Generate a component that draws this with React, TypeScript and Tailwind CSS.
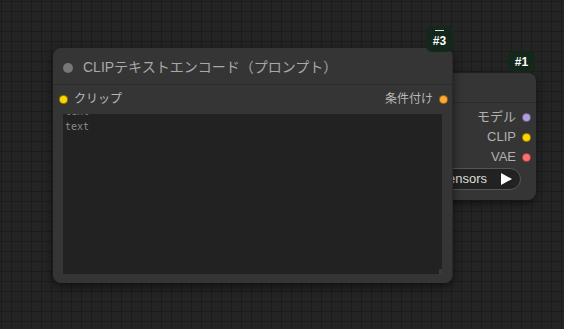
import React from 'react';

const font = "font-['Liberation_Sans','Noto_Sans_CJK_JP',sans-serif]";

const Dot: React.FC<{ color: string }> = ({ color }) => (
  <span className={`block w-[9px] h-[9px] rounded-full border border-black/40 ${color}`} />
);

const Badge: React.FC<{ label: string; className: string }> = ({ label, className }) => (
  <div
    className={`absolute flex flex-col items-center justify-center rounded-[6px] bg-[#13281a] text-white text-[12px] font-bold ${className}`}
  >
    {label}
  </div>
);

const CheckpointNode: React.FC = () => (
  <div className="absolute left-[400px] top-[73px] w-[136px] h-[127px] rounded-[8px] bg-[#353535] shadow-[0_3px_8px_rgba(0,0,0,0.5)]">
    <div className="h-[30px] border-b border-[#2a2a2a]" />
    <div className="flex flex-col items-end pr-[5px] pt-[4px] gap-0 text-[13px] text-[#b0b0b0]">
      {[
        { name: 'モデル', color: 'bg-[#b39ddb]' },
        { name: 'CLIP', color: 'bg-[#ffd500]' },
        { name: 'VAE', color: 'bg-[#ff6e6e]' },
      ].map((o) => (
        <div key={o.name} className="flex items-center gap-[6px] h-[20px]">
          <span>{o.name}</span>
          <Dot color={o.color} />
        </div>
      ))}
    </div>
    <div className="absolute left-[10px] right-[15px] top-[95px] h-[22px] rounded-full bg-[#222] border border-[#555] flex items-center justify-end pr-[8px] gap-[14px] text-[13px] text-[#ddd]">
      <span>ckpt.safetensors</span>
      <span className="w-0 h-0 border-y-[6px] border-y-transparent border-l-[11px] border-l-white" />
    </div>
  </div>
);

const ClipNode: React.FC = () => (
  <div className="absolute left-[53px] top-[48px] w-[400px] h-[235px] rounded-[8px] bg-[#353535] border-r border-[#2a2a2a] shadow-[0_3px_10px_rgba(0,0,0,0.55)] flex flex-col">
    <div className="h-[37px] flex items-center gap-[10px] pl-[10px] pt-[3px] border-b border-[#2b2b2b]">
      <span className="block w-[10px] h-[10px] rounded-full bg-[#777]" />
      <span className="text-[14px] text-[#a8a8a8]">CLIPテキストエンコード（プロンプト）</span>
    </div>
    <div className="flex items-center justify-between h-[24px] pl-[6px] pr-[4px] mt-[2px] text-[12px] text-[#b8b8b8]">
      <div className="flex items-center gap-[6px]">
        <Dot color="bg-[#ffd500]" />
        <span>クリップ</span>
      </div>
      <div className="flex items-center gap-[6px]">
        <span>条件付け</span>
        <Dot color="bg-[#ffa931]" />
      </div>
    </div>
    <div className="mx-[10px] mt-[3px] h-[160px] bg-[#222] relative overflow-hidden">
      <div className="absolute left-[2px] top-[-7px] font-['DejaVu_Sans_Mono',monospace] text-[10px] leading-[10px] text-[#8a8a8a]">
        text
      </div>
      <div className="pl-[2px] pt-[8px] font-['DejaVu_Sans_Mono',monospace] text-[10px] leading-[10px] text-[#8a8a8a]">
        text
      </div>
      <div className="absolute right-0 bottom-0 w-[3px] h-[5px] bg-[#3a3a3a]" />
    </div>
  </div>
);

const App: React.FC = () => {
  return (
    <div
      className={`relative w-[564px] h-[329px] overflow-hidden bg-[#242424] ${font} bg-[linear-gradient(#1c1c1c_1px,transparent_1px),linear-gradient(90deg,#1c1c1c_1px,transparent_1px)] bg-[size:10px_10px] bg-[position:1px_1px]`}
    >
      <CheckpointNode />
      <Badge label="#1" className="left-[508px] top-[51px] w-[27px] h-[21px]" />
      <ClipNode />
      <Badge label="#3" className="left-[426px] top-[26px] w-[27px] h-[26px] pt-[3px]" />
      <div className="absolute left-[435px] top-[30px] w-[9px] h-px bg-[#ddd]" />
    </div>
  );
};

export default App;
